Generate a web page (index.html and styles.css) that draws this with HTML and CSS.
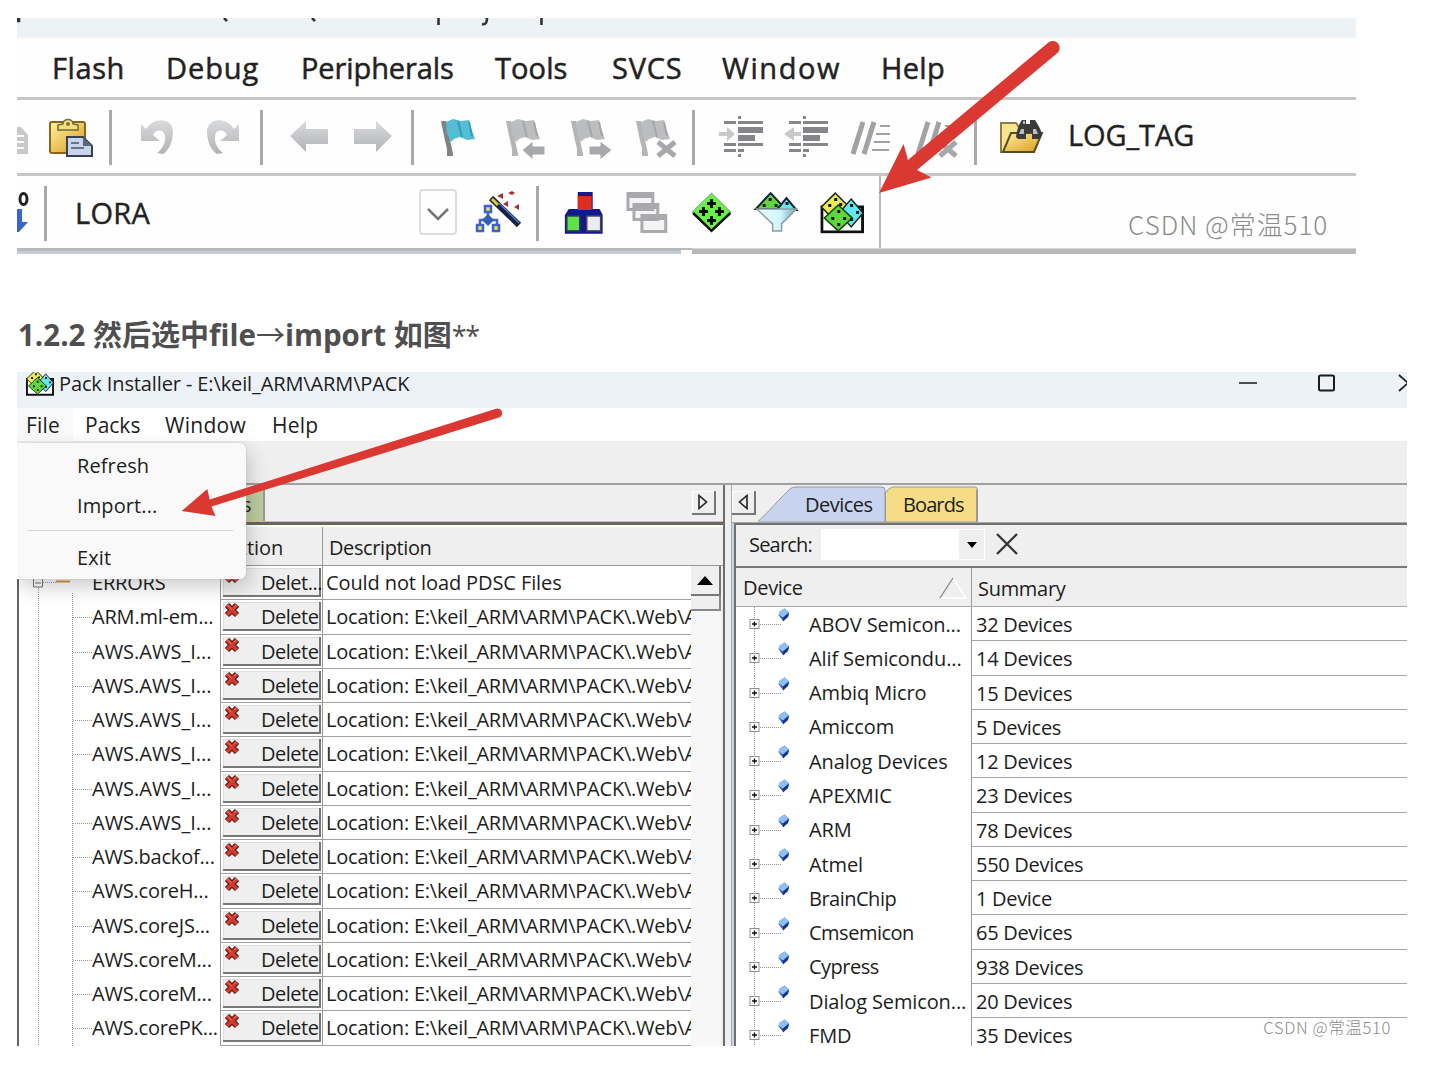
FILE: index.html
```html
<!DOCTYPE html>
<html lang="zh">
<head>
<meta charset="utf-8">
<title>Pack Installer</title>
<link rel="stylesheet" href="styles.css">
</head>
<body>
<svg class="defs" aria-hidden="true">
  <defs>
    <linearGradient id="gold" x1="0" y1="0" x2="1" y2="1"><stop offset="0" stop-color="#fff2a0"/><stop offset="1" stop-color="#d99a1c"/></linearGradient>
    <linearGradient id="ice" x1="0" y1="0" x2="1" y2="0"><stop offset="0" stop-color="#eefeff"/><stop offset=".6" stop-color="#d0f4fa"/><stop offset="1" stop-color="#6fa9b8"/></linearGradient>
    <linearGradient id="grey" x1="0" y1="0" x2="0" y2="1"><stop offset="0" stop-color="#d9dadc"/><stop offset="1" stop-color="#b2b3b6"/></linearGradient>
    <symbol id="flag" viewBox="0 0 36 40">
      <path d="M1 3h5l7 33v2H7v-7L4 18z" fill="var(--pole)"/>
      <path d="M6 4l7-3 8 2 8-1 2 8 4 11-8 1-7-3-6 2-3 3-4-9z" fill="var(--cloth)"/>
      <path d="M18 3l4 16M29 4l3 14" stroke="var(--fold)" stroke-width="2" fill="none"/>
    </symbol>
    <symbol id="pack" viewBox="0 0 44 42">
      <path d="M1.5 15v25h41V15z" fill="#fff" stroke="#111" stroke-width="3"/>
      <path d="M15 1l14 14-14 14L1 15z" fill="#e8ec50" stroke="#222" stroke-width="1.5"/>
      <path d="M31 7l12 14-12 14-12-14z" fill="#62e6f0" stroke="#222" stroke-width="1.5"/>
      <path d="M18 13l14 13-14 13L4 26z" fill="#5fd63b" stroke="#14400c" stroke-width="1.5"/>
      <g fill="#111"><path d="M14 6h3v3h-3zM8 12h3v3H8zM19 11h3v3h-3zM30 12h3v3h-3zM36 19h3v3h-3zM30 26h3v3h-3zM17 18h3v3h-3zM11 25h3v3h-3zM23 25h3v3h-3zM17 31h3v3h-3z"/></g>
    </symbol>
    <symbol id="cross" viewBox="0 0 16 16">
      <path d="M3 3l10 10M13 3L3 13" stroke="#4b1612" stroke-width="6"/>
      <path d="M3 3l10 10M13 3L3 13" stroke="#d53a2b" stroke-width="3.8"/>
      <path d="M3 2.6l4.6 4.7M12.5 2.6L10 5" stroke="#f08070" stroke-width="1"/>
    </symbol>
    <symbol id="node" viewBox="0 0 42 34">
      <path d="M11 17.5h21" stroke="#999" stroke-dasharray="1 1"/>
      <rect x="1" y="12.5" width="9" height="9" fill="#fff" stroke="#919191"/>
      <path d="M3 17h5M5.500 14.500v5" stroke="#111" stroke-width="1.300"/>
      <path d="M35.500 1.500l4.500 4-1 4-5 4.500-4.500-6 1-3z" fill="#2f5fb8"/>
      <path d="M35.500 1.500l4.500 4-6 5-4.500-3 1-3z" fill="#8fc0f5"/><path d="M34 10.500l6-5-1 4.500-5 4.500z" fill="#17348c"/>
    </symbol>
  </defs>
</svg>
<main class="article">
  <figure class="shot keil">
    <div class="keil-title">
      <svg width="1339" height="20" viewBox="17 18 1339 20"><path d="M17 18h2v3h-2zM224 18l3 3M312 18l3 3M438.500 18v7M482 24c4 1 5-2 5-6M541.500 18v7" fill="none" stroke="#333" stroke-width="2.600"/></svg>
    </div>
    <nav class="keil-menu">
      <span class="m1">Flash</span><span class="m2">Debug</span><span class="m3">Peripherals</span><span class="m4">Tools</span><span class="m5">SVCS</span><span class="m6">Window</span><span class="m7">Help</span>
    </nav>
    <div class="keil-bar">
      <svg width="92" height="73" viewBox="17 100 92 73">
        <path d="M17 127h4l7 8v19H17z" fill="#c8c9cb"/><path d="M17 136h7M17 142h7M17 148h7" stroke="#fff" stroke-width="2"/>
        <rect x="50" y="122" width="35" height="31" rx="2" fill="url(#gold)" stroke="#8c6518" stroke-width="2"/>
        <path d="M58 130v-5l5-1c0-6 10-6 10 0l5 1v5z" fill="#f1df80" stroke="#73683e" stroke-width="1.500"/><circle cx="68" cy="124" r="2" fill="#8c7130"/>
        <path d="M67 137h16l9 9v10H67z" fill="#c9d5ea" stroke="#384154" stroke-width="2"/><path d="M83 137v9h9z" fill="#59677e"/><path d="M71 143h8M71 148h13" stroke="#65738e" stroke-width="2"/>
      </svg>
      <i class="sep"></i>
      <svg width="148" height="73" viewBox="112 100 148 73">
        <path d="M141 124l5 5c7-12 26-12 27 2 0 12-5 20-10 23l-6-1c5-4 9-10 8-17-1-7-9-7-12-1l7 6h-19z" fill="url(#grey)"/>
        <path d="M239 124l-5 5c-7-12-26-12-27 2 0 12 5 20 10 23l6-1c-5-4-9-10-8-17 1-7 9-7 12-1l-7 6h19z" fill="url(#grey)"/>
      </svg>
      <i class="sep"></i>
      <svg width="148" height="73" viewBox="263 100 148 73">
        <path d="M290 136l16-15v8h22v15h-22v8zM392 136l-16-15v8h-22v15h22v8z" fill="url(#grey)"/>
      </svg>
      <i class="sep"></i>
      <svg width="278" height="73" viewBox="414 100 278 73">
        <use href="#flag" class="flag-on" x="440" y="118" width="36" height="40"/>
        <g class="flag-off"><use href="#flag" x="505" y="118" width="36" height="40"/><use href="#flag" x="570" y="118" width="36" height="40"/><use href="#flag" x="635" y="118" width="36" height="40"/></g>
        <g fill="#a7a8ab" stroke="#fff" stroke-width="1"><path d="M522 150l11-9v5h12v9h-12v5zM612 150l-12-9v5h-11v9h11v5z"/></g>
        <path d="M658 142l17 14M675 142l-17 14" stroke="#a7a8ab" stroke-width="5"/>
      </svg>
      <i class="sep"></i>
      <svg width="279" height="73" viewBox="695 100 279 73">
        <g fill="#85868a">
          <path d="M724 121h12v3h-12zM738 121h25v3h-25zM738 127h25v6h-25zM738 135h17v6h-17zM738 143h25v3h-25zM724 143h12v3h-12zM724 149h12v3h-12zM738 149h6v3h-6zM738 116h3v3h-3zM738 154h3v3h-3z"/>
          <path d="M789 121h12v3h-12zM803 121h25v3h-25zM803 127h25v6h-25zM803 135h17v6h-17zM803 143h25v3h-25zM789 143h12v3h-12zM789 149h12v3h-12zM803 149h6v3h-6zM803 116h3v3h-3zM803 154h3v3h-3z"/>
        </g>
        <path d="M719 132h8v-5l8 7-8 7v-5h-8zM784 134l10-7v5h7v4h-7v5z" fill="#c7c8ca"/>
        <g stroke="#a1a2a5" stroke-width="5"><path d="M863 122l-10 32M874 122l-10 32M928 122l-10 32M939 122l-10 32"/></g>
        <path d="M880 126h10M876 134h14M874 142h16M872 150h17M945 126h7" stroke="#a1a2a5" stroke-width="2"/>
        <path d="M940 142l16 14M956 142l-16 14" stroke="#a7a8ab" stroke-width="5"/>
      </svg>
      <i class="sep"></i>
      <svg width="91" height="73" viewBox="977 100 91 73">
        <path d="M1001 152v-29h15l3 4h15v25z" fill="#f6e58c" stroke="#8d7c48" stroke-width="2"/>
        <path d="M1003 152l8-19h31l-8 19z" fill="url(#gold)" stroke="#5b4a22" stroke-width="2"/>
        <path d="M1016 137c1-8 3-13 6-17h4v4h4v-4h5c3 5 6 9 7 15l-3 4h-7v-6h-6v6h-8z" fill="#3b3b3b"/>
        <path d="M1019 134l2-5h3v5zM1033 134v-5h3l2 5zM1023 121h2v3h-2z" fill="#bcbcbc"/>
      </svg>
      <span class="log">LOG_TAG</span>
    </div>
    <div class="keil-bar lower">
      <svg width="27" height="72" viewBox="17 176 27 72">
        <ellipse cx="23.500" cy="199" rx="3.500" ry="5.500" fill="none" stroke="#222" stroke-width="3"/>
        <path d="M17 209h5v13h6l-9 10h-2z" fill="#3c64cf"/>
      </svg>
      <i class="sep"></i>
      <span class="lora">LORA</span>
      <span class="drop"><svg width="24" height="16" viewBox="0 0 24 16"><path d="M2 3l10 10L22 3" fill="none" stroke="#777" stroke-width="2.600"/></svg></span>
      <svg width="79" height="72" viewBox="457 176 79 72">
        <path d="M488 211v11M480 228v-8h17v8" stroke="#3f66c9" stroke-width="2.500" fill="none"/><path d="M488 214l6 6-6 6-6-6z" fill="#345fae"/>
        <g fill="#f3e23c" stroke="#3c62d2" stroke-width="2.500"><rect x="485" y="206" width="6" height="6"/><rect x="477" y="225" width="6" height="6"/><rect x="493" y="225" width="6" height="6"/></g>
        <path d="M491 198l28 27" stroke="#17243b" stroke-width="6"/><path d="M499 203l20 20" stroke="#4e79dd" stroke-width="1.500"/><path d="M492 199l6 6" stroke="#e2ce32" stroke-width="3"/>
        <path d="M497 196l6-3v6zM508 193l4-2 3 2-3 2zM503 204l5-3v6zM514 207l5-3v6z" fill="#a83232"/>
      </svg>
      <i class="sep"></i>
      <svg width="342" height="72" viewBox="539 176 342 72">
        <path d="M578 192h15v17h7l3 6v19h-38v-19l4-6h9z" fill="#14188b"/>
        <rect x="578" y="196" width="14" height="14" fill="#e02d1f"/><rect x="567" y="216" width="13" height="15" fill="#61e04e" stroke="#28404a" stroke-width="1.500"/><rect x="587" y="216" width="14" height="15" fill="#ececf2" stroke="#445" stroke-width="1.500"/>
        <g fill="#f4f4f5" stroke="#a9aaad" stroke-width="3"><path d="M628.500 193.500h25v16h-25zM634.500 204.500h24v15h-24zM642.500 215.500h24v16h-24z"/><path d="M628 196h26M634 207h25M642 218h25" stroke-width="4"/></g>
        <path d="M712.500 193l19.500 19-19.500 19L693 212z" fill="#68ef4a" stroke="#8a9b85"/><path d="M694 213l18.500 18 19-18" stroke="#111" stroke-width="2.500" fill="none"/>
        <g fill="#0b0b0b"><path d="M711 199h3v3h3v3h-3v3h-3v-3h-3v-3h3zM703 207h3v3h3v3h-3v3h-3v-3h-3v-3h3zM719 207h3v3h3v3h-3v3h-3v-3h-3v-3h3zM711 216h3v3h3v3h-3v3h-3v-3h-3v-3h3z"/></g>
        <path d="M772 193l15 16h-30z" fill="#5fd63b" stroke="#123" stroke-width="2"/><path d="M788 198l10 12h-20z" fill="#62e6f0" stroke="#123" stroke-width="2"/><path d="M770 198h3v3h-3zM764 204h3v3h-3zM776 204h3v3h-3zM787 202h3v3h-3z" fill="#111"/>
        <path d="M758 209h40l-15 15v7h-9v-7z" fill="url(#ice)" stroke="#8a9da3" stroke-width="1.500"/>
        <use href="#pack" x="822" y="192" width="44" height="42"/>
      </svg>
      <span class="mark big">CSDN @常温510</span>
    </div>
    <div class="keil-foot"><i class="f1"></i><i class="f2"></i><i class="f3"></i></div>
    <svg class="arrow a1" width="190" height="160" viewBox="875 38 190 160"><path d="M879 193l24.500-49 4.500 16L1049 42a7 7 0 0 1 9 10.500L917 170l14.500 7.500z" fill="#dc3832"/></svg>
  </figure>

  <h4 class="heading">1.2.2 <span class="cjk">然后选中</span>file<span class="to">→</span>import <span class="cjk">如图</span><span class="star">**</span></h4>

  <figure class="shot installer">
    <header class="titlebar">
      <svg width="28" height="24" viewBox="0 4 44 38" preserveAspectRatio="none"><use href="#pack" width="44" height="42"/></svg>
      <span class="ttl">Pack Installer - E:\keil_ARM\ARM\PACK</span>
      <svg class="wm" width="170" height="36" viewBox="1237 372 170 36"><path d="M1239 383h18" stroke="#222" stroke-width="1.600"/><rect x="1319" y="375.500" width="15" height="15" rx="1.500" fill="none" stroke="#1c1c1c" stroke-width="2"/><path d="M1399 375l9 8-9 8" fill="none" stroke="#222" stroke-width="1.800"/></svg>
    </header>
    <nav class="menubar"><span class="n1">File</span><span class="n2">Packs</span><span class="n3">Window</span><span class="n4">Help</span></nav>
    <div class="tools"></div>
    <div class="panes">
      <section class="left">
        <div class="strip"><span class="tab-green">s</span><span class="scroller"><svg width="10" height="16" viewBox="0 0 10 16"><path d="M1 1.500v13L8.500 8z" fill="none" stroke="#222" stroke-width="1.600"/></svg></span></div>
        <div class="body">
          <div class="lhead"><span class="c1"></span><span class="c2">Action</span><span class="c3">Description</span></div>
          <div class="lwrap">
            <div class="rows">
              <div class="row"><span class="c1">ERRORS</span><span class="c2"><b><svg><use href="#cross"/></svg>Delet...</b></span><span class="c3">Could not load PDSC Files</span></div>
              <div class="row"><span class="c1 leaf">ARM.ml-em...</span><span class="c2"><b><svg><use href="#cross"/></svg>Delete</b></span><span class="c3 loc">Location: E:\keil_ARM\ARM\PACK\.Web\A</span></div>
              <div class="row"><span class="c1 leaf wide">AWS.AWS_I...</span><span class="c2"><b><svg><use href="#cross"/></svg>Delete</b></span><span class="c3 loc">Location: E:\keil_ARM\ARM\PACK\.Web\A</span></div>
              <div class="row"><span class="c1 leaf wide">AWS.AWS_I...</span><span class="c2"><b><svg><use href="#cross"/></svg>Delete</b></span><span class="c3 loc">Location: E:\keil_ARM\ARM\PACK\.Web\A</span></div>
              <div class="row"><span class="c1 leaf wide">AWS.AWS_I...</span><span class="c2"><b><svg><use href="#cross"/></svg>Delete</b></span><span class="c3 loc">Location: E:\keil_ARM\ARM\PACK\.Web\A</span></div>
              <div class="row"><span class="c1 leaf wide">AWS.AWS_I...</span><span class="c2"><b><svg><use href="#cross"/></svg>Delete</b></span><span class="c3 loc">Location: E:\keil_ARM\ARM\PACK\.Web\A</span></div>
              <div class="row"><span class="c1 leaf wide">AWS.AWS_I...</span><span class="c2"><b><svg><use href="#cross"/></svg>Delete</b></span><span class="c3 loc">Location: E:\keil_ARM\ARM\PACK\.Web\A</span></div>
              <div class="row"><span class="c1 leaf wide">AWS.AWS_I...</span><span class="c2"><b><svg><use href="#cross"/></svg>Delete</b></span><span class="c3 loc">Location: E:\keil_ARM\ARM\PACK\.Web\A</span></div>
              <div class="row"><span class="c1 leaf">AWS.backof...</span><span class="c2"><b><svg><use href="#cross"/></svg>Delete</b></span><span class="c3 loc">Location: E:\keil_ARM\ARM\PACK\.Web\A</span></div>
              <div class="row"><span class="c1 leaf">AWS.coreH...</span><span class="c2"><b><svg><use href="#cross"/></svg>Delete</b></span><span class="c3 loc">Location: E:\keil_ARM\ARM\PACK\.Web\A</span></div>
              <div class="row"><span class="c1 leaf">AWS.coreJS...</span><span class="c2"><b><svg><use href="#cross"/></svg>Delete</b></span><span class="c3 loc">Location: E:\keil_ARM\ARM\PACK\.Web\A</span></div>
              <div class="row"><span class="c1 leaf">AWS.coreM...</span><span class="c2"><b><svg><use href="#cross"/></svg>Delete</b></span><span class="c3 loc">Location: E:\keil_ARM\ARM\PACK\.Web\A</span></div>
              <div class="row"><span class="c1 leaf">AWS.coreM...</span><span class="c2"><b><svg><use href="#cross"/></svg>Delete</b></span><span class="c3 loc">Location: E:\keil_ARM\ARM\PACK\.Web\A</span></div>
              <div class="row"><span class="c1 leaf">AWS.corePK...</span><span class="c2"><b><svg><use href="#cross"/></svg>Delete</b></span><span class="c3 loc">Location: E:\keil_ARM\ARM\PACK\.Web\A</span></div>
            </div>
            <div class="sbar"><span class="up"><svg width="16" height="9" viewBox="0 0 16 9"><path d="M8 0l8 9H0z"/></svg></span><span class="thumb"></span></div>
          </div>
          <svg class="tree" width="60" height="480" viewBox="19 566 60 480"><path d="M38.500 588v458M72.500 593v453" stroke="#999" stroke-dasharray="1 1"/><path d="M43 582.500h14" stroke="#999" stroke-dasharray="1 1"/><path d="M33.500 575v12h9v-12M35 583h6" fill="none" stroke="#777"/><path d="M56 581.500h14" stroke="#d9944a" stroke-width="2"/></svg>
        </div>
      </section>
      <section class="right">
        <div class="strip">
          <span class="scroller"><svg width="10" height="16" viewBox="0 0 10 16"><path d="M9 1.500v13L1.500 8z" fill="none" stroke="#222" stroke-width="1.600"/></svg></span>
          <div class="tabs">
            <svg width="222" height="37" viewBox="758 485 222 37"><path d="M757 522c6-4 27-28 33-33q2-2 6-2h86q3 0 3 3v32z" fill="#c8d3ef" stroke="#999"/><path d="M885.500 522v-29q3-5 7-6h82q3 0 3 3v32z" fill="#f6dc86" stroke="#999"/><path d="M977 490v32" stroke="#999" stroke-width="2"/></svg>
            <span class="t1">Devices</span><span class="t2">Boards</span>
          </div>
        </div>
        <div class="body">
          <div class="search"><label>Search:</label><span class="box"><svg width="10" height="6" viewBox="0 0 10 6"><path d="M0 0h10L5 6z"/></svg></span><svg class="clear" width="22" height="22" viewBox="0 0 22 22"><path d="M1 1l20 20M21 1L1 21" stroke="#333" stroke-width="2.300"/></svg></div>
          <div class="rhead"><span class="d1">Device<svg width="28" height="22" viewBox="0 0 28 22"><path d="M1 21h26L14 1" fill="none" stroke="#fff" stroke-width="1.500"/><path d="M1 21L14 1" stroke="#888" stroke-width="1.300"/></svg></span><span class="d2">Summary</span></div>
          <div class="rrows">
            <div class="rrow"><span class="d1"><svg><use href="#node"/></svg>ABOV Semicon...</span><span class="d2">32 Devices</span></div>
            <div class="rrow"><span class="d1"><svg><use href="#node"/></svg>Alif Semicondu...</span><span class="d2">14 Devices</span></div>
            <div class="rrow"><span class="d1"><svg><use href="#node"/></svg>Ambiq Micro</span><span class="d2">15 Devices</span></div>
            <div class="rrow"><span class="d1"><svg><use href="#node"/></svg>Amiccom</span><span class="d2">5 Devices</span></div>
            <div class="rrow"><span class="d1"><svg><use href="#node"/></svg>Analog Devices</span><span class="d2">12 Devices</span></div>
            <div class="rrow"><span class="d1"><svg><use href="#node"/></svg>APEXMIC</span><span class="d2">23 Devices</span></div>
            <div class="rrow"><span class="d1"><svg><use href="#node"/></svg>ARM</span><span class="d2">78 Devices</span></div>
            <div class="rrow"><span class="d1"><svg><use href="#node"/></svg>Atmel</span><span class="d2">550 Devices</span></div>
            <div class="rrow"><span class="d1 tight"><svg><use href="#node"/></svg>BrainChip</span><span class="d2">1 Device</span></div>
            <div class="rrow"><span class="d1 tight"><svg><use href="#node"/></svg>Cmsemicon</span><span class="d2">65 Devices</span></div>
            <div class="rrow"><span class="d1 tight"><svg><use href="#node"/></svg>Cypress</span><span class="d2">938 Devices</span></div>
            <div class="rrow"><span class="d1"><svg><use href="#node"/></svg>Dialog Semicon...</span><span class="d2">20 Devices</span></div>
            <div class="rrow last"><span class="d1"><svg><use href="#node"/></svg>FMD</span><span class="d2">35 Devices</span></div>
          </div>
        </div>
      </section>
    </div>
    <div class="popup"><span>Refresh</span><span>Import...</span><hr><span>Exit</span></div>
    <svg class="arrow a2" width="330" height="115" viewBox="178 405 330 115"><path d="M181.700 511l25.600-22 2.400 10.500L496 408.700a4.600 4.600 0 0 1 3 8.800L211.500 506.500l4 9.500z" fill="#dc3832"/></svg>
    <span class="mark small">CSDN @常温510</span>
  </figure>
</main>
</body>
</html>
```
FILE: styles.css
```css
* { box-sizing: border-box; }
body { margin: 0; background: #fff; font-family: "Open Sans", "Noto Sans CJK SC", sans-serif; color: #1d1d1d; }
svg { display: block; flex: none; }
.defs { position: absolute; width: 0; height: 0; }
.article { padding: 18px 0 0 17px; height: 1083px; overflow: hidden; }
.shot { margin: 0; position: relative; overflow: hidden; }
.arrow { position: absolute; }
.flag-on { --pole: #808284; --cloth: #55bdd6; --fold: #3b9ab5; }
.flag-off { --pole: #b4b5b7; --cloth: #bcbdbf; --fold: #a5a6a9; }

.keil { width: 1339px; height: 236px; display: flex; flex-direction: column; background: #fefefe; }
.keil-title { height: 20px; background: #edf2f7; }
.keil-menu { height: 59px; padding-left: 35px; display: flex; align-items: center; font-size: 29px; line-height: 40px; color: #222; -webkit-text-stroke: .5px #222; }
.keil-menu span { white-space: nowrap; }
.m1 { width: 114px; letter-spacing: .6px; }
.m2 { width: 135px; letter-spacing: .9px; }
.m3 { width: 194px; letter-spacing: -.1px; }
.m4 { width: 117px; letter-spacing: .1px; }
.m5 { width: 110px; letter-spacing: .8px; }
.m6 { width: 159px; letter-spacing: 1.6px; }
.m7 { width: 80px; letter-spacing: .3px; }
.keil-bar { height: 76px; border-top: 3px solid #c6c6c7; display: flex; align-items: center; }
.sep { width: 3px; height: 55px; margin-top: 2px; background: #a9a9a9; flex: none; }
.log, .lora { font-size: 29px; line-height: 40px; color: #222; -webkit-text-stroke: .4px #222; }
.log { letter-spacing: -.1px; margin-top: -4px; }
.lora { width: 372px; padding-left: 28px; letter-spacing: .3px; margin-top: 2px; }
.drop { width: 38px; height: 46px; border: 2px solid #ddd; border-radius: 4px; display: flex; align-items: center; justify-content: center; padding-top: 4px; flex: none; }
.lora { flex: none; }
.keil-bar.lower { height: 75px; position: relative; }
.keil-bar.lower > svg:last-of-type { border-right: 2px solid #bbb; }
.mark { font-family: "Noto Sans CJK SC", sans-serif; font-weight: 300; color: #8c8c8c; white-space: nowrap; }
.mark.big { margin: 23px 0 0 247px; font-size: 26px; line-height: 34px; letter-spacing: .95px; }
.keil-foot { height: 6px; display: flex; }
.f1 { width: 664px; border-top: 3px solid #b8b9ba; background: #c3cddd; }
.f2 { width: 11px; border-top: 2px solid #bbb; }
.f3 { flex: 1; border-top: 1px solid #d6d6d6; background: #b9b9b9; }
.a1 { left: 858px; top: 20px; }

.heading { margin: 57px 0 0 1px; height: 61px; font-size: 29.500px; line-height: 44px; font-weight: 700; color: #4f4f4f; white-space: nowrap; }
.cjk { font-family: "Noto Sans CJK SC", sans-serif; font-size: 29px; }
.to { font-family: "Noto Sans CJK SC", sans-serif; font-weight: 400; font-size: 29px; }
.star { font-weight: 400; font-size: 27px; letter-spacing: -1.500px; }

.installer { width: 1390px; height: 674px; background: #efefef; font-size: 20px; line-height: 28px; }
.installer span, .installer b { white-space: nowrap; }
.titlebar { height: 36px; background: #edf2f8; display: flex; padding-left: 9px; }
.ttl { margin-left: 5px; line-height: 23px; flex: 1; letter-spacing: -.12px; }
.menubar { height: 33px; background: #fff; display: flex; line-height: 35px; font-size: 21px; }
.n1 { width: 56px; padding-left: 9px; background: #f9f9f9; letter-spacing: .2px; }
.n2 { width: 92px; padding-left: 12px; }
.n3 { width: 107px; letter-spacing: .3px; }
.n4 { width: 80px; letter-spacing: .2px; }
.tools { height: 42px; }
.panes { display: flex; height: 563px; border-top: 2px solid #a0a0a0; }
.left { width: 708px; border-right: 2px solid #6d6d6d; }
.right { flex: 1; margin-left: 6px; min-width: 0; border-left: 1px solid #aaa; }
.strip { height: 37px; display: flex; align-items: flex-end; }
.tab-green { width: 248px; height: 33px; padding-left: 225px; background: #bdcc9e; border-right: 2px solid #999; line-height: 32px; }
.scroller { width: 24px; height: 24px; margin-bottom: 7px; display: flex; align-items: center; justify-content: center; border: solid #777; border-width: 0 2px 2px 0; box-shadow: inset 1px 1px #fff; }
.left .scroller { margin-left: auto; margin-right: 7px; }
.left .body { height: 524px; border-top: 3px solid #666; border-left: 2px solid #666; box-shadow: 0 -1px #d8c37a; position: relative; }
.lhead { height: 41px; display: flex; align-items: center; border-top: 2px solid #fff; border-bottom: 1px solid #999; }
.lhead span { height: 39px; line-height: 41px; }
.c1 { width: 201px; padding-left: 73px; letter-spacing: -.2px; }
.wide { letter-spacing: 0; }
.c2 { width: 102px; border-left: 1px solid #999; }
.c3 { flex: 1; border-left: 1px solid #999; padding-left: 3px; overflow: hidden; letter-spacing: -.1px; }
.lhead .c2 { padding-left: 4px; border-color: transparent; letter-spacing: -.1px; }
.lhead .c3 { padding-left: 6px; letter-spacing: -.4px; }
.lwrap { display: flex; height: 480px; overflow: hidden; }
.rows { width: 672px; background: #fff; }
.row { display: flex; height: 34.270px; line-height: 34px; }
.row .c2, .row .c3 { border-bottom: 1.500px solid #a0a0a0; }
.row .c2 { padding: 2px 1px 2px 2px; }
.row b { display: flex; height: 29px; font-weight: 400; line-height: 29px; background: #efefef; border: solid #777; border-width: 0 2px 2px 0; box-shadow: inset 1px 1px #ddd; padding-left: 1px; letter-spacing: -.5px; }
.row b svg { width: 16px; height: 16px; margin: 0 21px 0 0; }
.row .loc { letter-spacing: -.22px; }
.leaf { background: repeating-linear-gradient(90deg, #999 0 1px, #fff 1px 2px) 54px 17px / 19px 1px no-repeat; }
.sbar { flex: 1; margin-right: 2px; background: #f7f7f7; }
.up { display: flex; height: 30px; align-items: center; justify-content: center; background: #efefef; border: solid #777; border-width: 0 2px 2px 0; }
.thumb { display: block; height: 15px; background: #efefef; border: solid #888; border-width: 0 2px 2px 0; }
.tree { position: absolute; left: 0; top: 41px; }

.tabs { position: relative; margin-left: 2px; }
.right .strip { border-bottom: 1px solid #aaa; height: 38px; }
.t1, .t2 { position: absolute; top: 6px; }
.t1 { left: 47px; letter-spacing: -.8px; letter-spacing: -.5px; }
.t2 { left: 145px; letter-spacing: -.9px; }
.right .body { height: 523px; border-left: 2px solid #707070; border-top: 2px solid #707070; margin-left: 2px; box-shadow: -2px 0 #c8d3ef; }
.search { height: 41px; display: flex; align-items: center; padding-left: 13px; letter-spacing: -.8px; }
.search label { width: 72px; margin-top: -2px; }
.clear { margin-top: -4px; }
.box { width: 164px; height: 31px; display: flex; align-items: center; justify-content: flex-end; margin: -2px 11px 0 0; border: solid #fff 1px; background: linear-gradient(90deg, #fff 137px, #efefef 137px); padding-right: 7px; }
.rhead { height: 41px; border-top: 2px solid #777; border-bottom: 1px solid #aaa; display: flex; line-height: 42px; }
.d1 { width: 235px; display: flex; align-items: center; }
.rhead .d1 { padding: 2px 4px 0 7px; justify-content: space-between; letter-spacing: -.3px; }
.d2 { flex: 1; border-left: 1px solid #999; padding-left: 4px; }
.rhead .d2 { padding-left: 6px; letter-spacing: -.3px; }
.rrows { background: #fff; height: 439px; }
.rrow { display: flex; height: 34.270px; line-height: 35px; }
.rrow .d1 { padding-left: 13px; background: repeating-linear-gradient(#999 0 1px, #fff 1px 2px) 18px 0 / 1px 35px no-repeat; letter-spacing: -.12px; }
.rrow .tight { letter-spacing: -.5px; }
.rrow .d1 svg { width: 42px; height: 34px; margin-right: 18px; }
.rrow .d2 { border-bottom: 1.500px solid #a6a6a6; letter-spacing: -.3px; }
.rrow.last .d2 { border-bottom: 0; }

.popup { position: absolute; left: 0; top: 71px; width: 229px; height: 136px; padding-top: 3px; background: #f9f9f9; border-radius: 0 6px 6px 0; box-shadow: 0 0 2px #bbb, 3px 8px 20px rgba(0, 0, 0, .2); display: flex; flex-direction: column; }
.popup span { height: 40px; line-height: 39px; padding-left: 60px; letter-spacing: .1px; }
.popup hr { width: 205px; margin: 4px 0 7px 11px; border: 0; border-top: 1px solid #d5d5d5; height: 1px; flex: none; }
.a2 { left: 161px; top: 33px; }
.mark.small { position: absolute; right: 16px; bottom: 5px; font-size: 16.600px; letter-spacing: .6px; }
```
